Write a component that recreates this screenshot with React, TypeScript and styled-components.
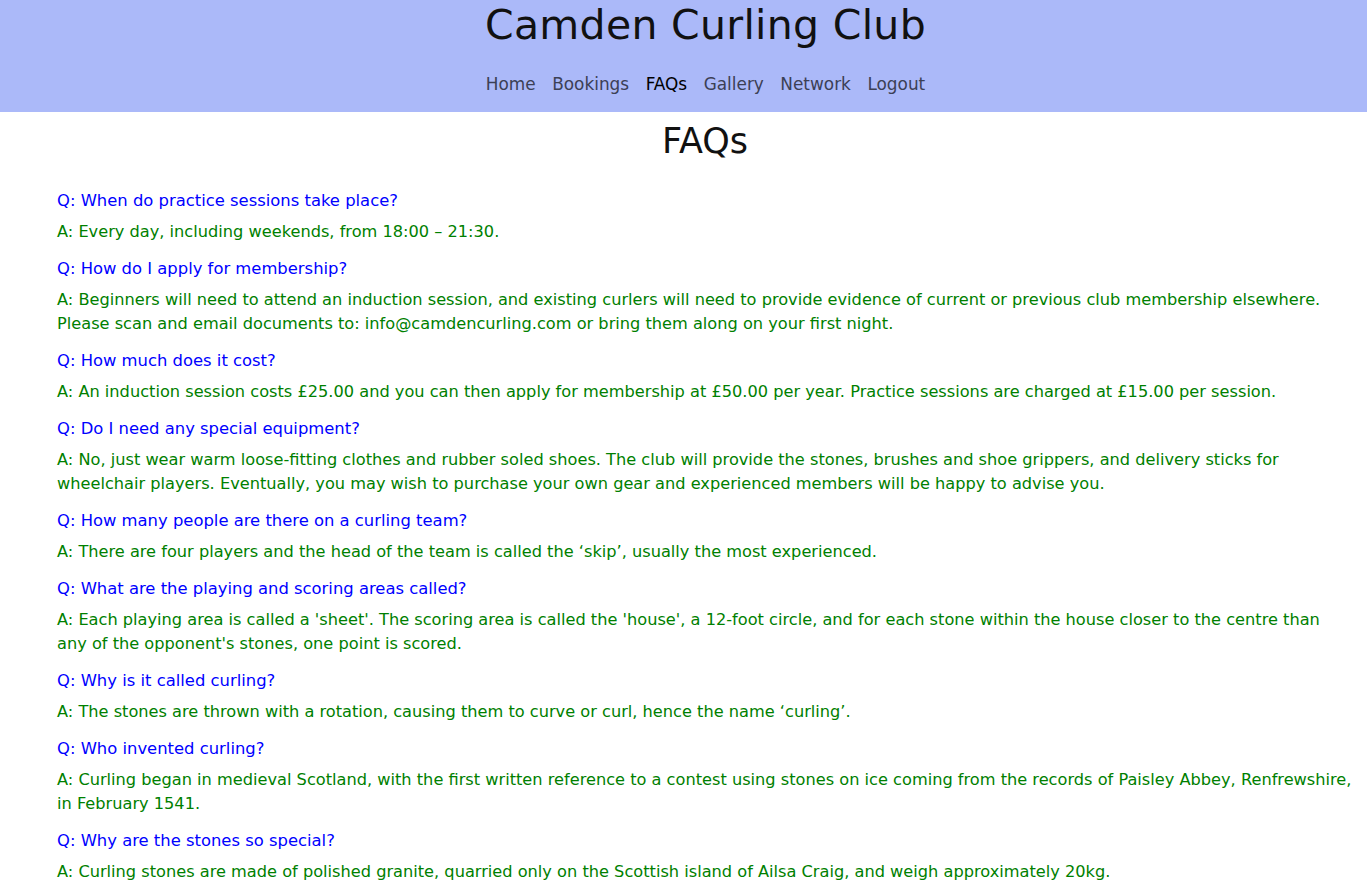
import React from "react";
import styled, { createGlobalStyle } from "styled-components";

const Global = createGlobalStyle`
  html, body { margin: 0; padding: 0; background: #ffffff; }
  body { font-family: "DejaVu Sans", "Noto Sans", sans-serif; }
`;

const Header = styled.header`
  background: #abb9f9;
  height: 112px;
  padding-left: 44px;
  display: flex;
  flex-direction: column;
  align-items: center;
  box-sizing: border-box;
`;

const Title = styled.h1`
  margin: 1px 0 0;
  font-size: 41px;
  font-weight: 400;
  color: #111111;
  line-height: 48px;
  letter-spacing: 0.3px;
`;

const Nav = styled.nav`
  display: flex;
  gap: 16.5px;
  margin-top: 24px;
`;

const NavLink = styled.a<{ $active?: boolean }>`
  font-size: 16.9px;
  color: ${(p) => (p.$active ? "#000000" : "#3c4055")};
  font-weight: 400;
  text-decoration: none;
  line-height: 22px;
`;

const Main = styled.main`
  padding: 0 14px 0 57px;
`;

const PageTitle = styled.h2`
  margin: 8px 0 27px;
  text-align: center;
  font-size: 35px;
  font-weight: 400;
  color: #111111;
  line-height: 42px;
`;

const Item = styled.div`
  margin-bottom: 13px;
`;

const Question = styled.p`
  margin: 0 0 7px;
  font-size: 16.4px;
  line-height: 24px;
  color: #0000ff;
`;

const Answer = styled.p`
  margin: 0;
  font-size: 16.2px;
  line-height: 24px;
  color: #008000;
`;

const faqs: [string, string][] = [
  ["Q: When do practice sessions take place?", "A: Every day, including weekends, from 18:00 \u2013 21:30."],
  [
    "Q: How do I apply for membership?",
    "A: Beginners will need to attend an induction session, and existing curlers will need to provide evidence of current or previous club membership elsewhere. Please scan and email documents to: info@camdencurling.com or bring them along on your first night.",
  ],
  [
    "Q: How much does it cost?",
    "A: An induction session costs \u00a325.00 and you can then apply for membership at \u00a350.00 per year. Practice sessions are charged at \u00a315.00 per session.",
  ],
  [
    "Q: Do I need any special equipment?",
    "A: No, just wear warm loose-fitting clothes and rubber soled shoes. The club will provide the stones, brushes and shoe grippers, and delivery sticks for wheelchair players. Eventually, you may wish to purchase your own gear and experienced members will be happy to advise you.",
  ],
  [
    "Q: How many people are there on a curling team?",
    "A: There are four players and the head of the team is called the \u2018skip\u2019, usually the most experienced.",
  ],
  [
    "Q: What are the playing and scoring areas called?",
    "A: Each playing area is called a 'sheet'. The scoring area is called the 'house', a 12-foot circle, and for each stone within the house closer to the centre than any of the opponent's stones, one point is scored.",
  ],
  [
    "Q: Why is it called curling?",
    "A: The stones are thrown with a rotation, causing them to curve or curl, hence the name \u2018curling\u2019.",
  ],
  [
    "Q: Who invented curling?",
    "A: Curling began in medieval Scotland, with the first written reference to a contest using stones on ice coming from the records of Paisley Abbey, Renfrewshire, in February 1541.",
  ],
  [
    "Q: Why are the stones so special?",
    "A: Curling stones are made of polished granite, quarried only on the Scottish island of Ailsa Craig, and weigh approximately 20kg.",
  ],
];

const links = ["Home", "Bookings", "FAQs", "Gallery", "Network", "Logout"];

export default function App() {
  return (
    <>
      <Global />
      <Header>
        <Title>Camden Curling Club</Title>
        <Nav>
          {links.map((l) => (
            <NavLink key={l} href="#" $active={l === "FAQs"}>
              {l}
            </NavLink>
          ))}
        </Nav>
      </Header>
      <Main>
        <PageTitle>FAQs</PageTitle>
        {faqs.map(([q, a]) => (
          <Item key={q}>
            <Question>{q}</Question>
            <Answer>{a}</Answer>
          </Item>
        ))}
      </Main>
    </>
  );
}
